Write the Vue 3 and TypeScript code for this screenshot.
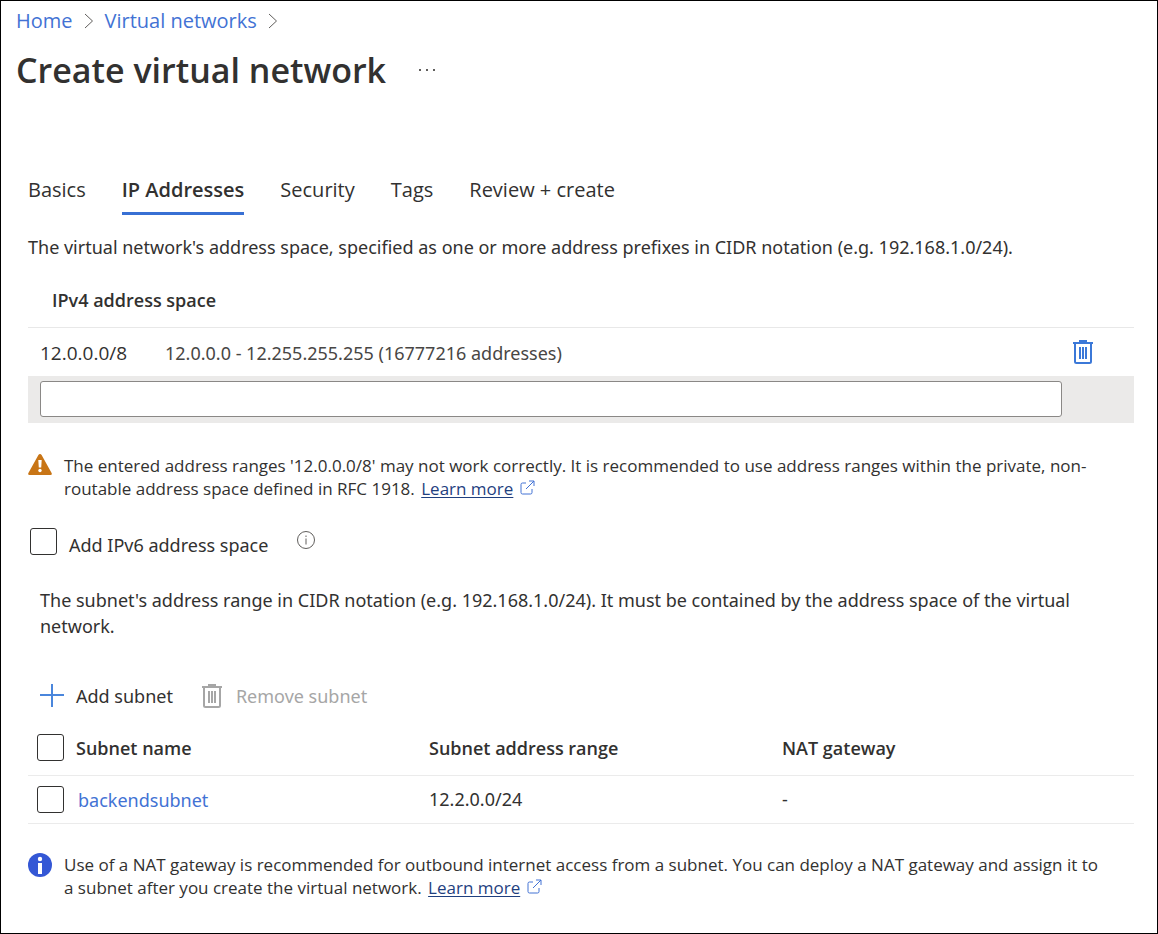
<script setup lang="ts">
import { ref } from 'vue'

interface Subnet {
  name: string
  range: string
  gateway: string
  selected: boolean
}

const tabs: string[] = ['Basics', 'IP Addresses', 'Security', 'Tags', 'Review + create']
const activeTab = ref('IP Addresses')
const newRange = ref('')
const addIpv6 = ref(false)
const allSelected = ref(false)
const subnets = ref<Subnet[]>([
  { name: 'backendsubnet', range: '12.2.0.0/24', gateway: '-', selected: false },
])

function toggleAll(): void {
  subnets.value.forEach((s) => (s.selected = allSelected.value))
}
</script>

<template>
  <div class="page">
    <nav class="crumbs" aria-label="Breadcrumb">
      <template v-for="crumb in ['Home', 'Virtual networks']" :key="crumb">
        <a href="#" class="crumb">{{ crumb }}</a>
        <svg class="chevron" viewBox="0 0 10 16" aria-hidden="true"><path d="M1 1l7.5 7L1 15" /></svg>
      </template>
    </nav>

    <header class="title-row">
      <h1>Create virtual network</h1>
      <button type="button" class="plain more" aria-label="More options">
        <svg viewBox="0 0 18 4" aria-hidden="true">
          <rect x="1" y="1" width="2" height="2" /><rect x="8" y="1" width="2" height="2" /><rect x="15" y="1" width="2" height="2" />
        </svg>
      </button>
    </header>

    <main class="content">
      <div class="tabs" role="tablist">
        <button
          v-for="tab in tabs"
          :key="tab"
          type="button"
          role="tab"
          class="plain tab"
          :class="{ active: tab === activeTab }"
          :aria-selected="tab === activeTab"
          @click="activeTab = tab"
        >{{ tab }}</button>
      </div>

      <p class="intro">The virtual network's address space, specified as one or more address prefixes in CIDR notation (e.g. 192.168.1.0/24).</p>

      <section class="space">
        <h2 id="space-title">IPv4 address space</h2>
        <div class="space-row">
          <span class="prefix">12.0.0.0/8</span>
          <span class="range">12.0.0.0 - 12.255.255.255 (16777216 addresses)</span>
          <button type="button" class="plain delete" aria-label="Delete address space">
            <svg class="bin" viewBox="0 0 20 24" aria-hidden="true">
              <path d="M0 3h20M7 3V1h6v2M2 3v18.500q0 1.500 1.500 1.500h13q1.500 0 1.500-1.500V3" />
              <path class="slats" d="M7 7v12M10 7v12M13 7v12" />
            </svg>
          </button>
        </div>
        <div class="entry">
          <input v-model="newRange" type="text" class="field" aria-labelledby="space-title" />
        </div>
      </section>

      <div class="notice warning">
        <svg class="notice-icon" viewBox="0 0 24 24" aria-hidden="true">
          <path class="warn-fill" d="M12 0q1 0 1.600 1.100l10 18q.8 1.900-1.100 1.900h-21q-1.900 0-1.100-1.900l10-18Q11 0 12 0z" />
          <path class="mark" d="M10.300 6h3.400l-.5 7.500h-2.400z" /><circle class="mark" cx="12" cy="16.500" r="1.700" />
        </svg>
        <p>The entered address ranges '12.0.0.0/8' may not work correctly. It is recommended to use address ranges within the private, non-routable address space defined in RFC 1918. <a href="#" class="learn">Learn more</a>
          <svg class="external" viewBox="0 0 15 15" aria-hidden="true"><path d="M6 3H2.500Q1 3 1 4.500v8Q1 14 2.500 14h8q1.500 0 1.500-1.500V9M9 1h5v5M14 1L6 9" /></svg>
        </p>
      </div>

      <div class="ipv6">
        <input id="ipv6" v-model="addIpv6" type="checkbox" class="check" />
        <label for="ipv6">Add IPv6 address space</label>
        <svg class="info" viewBox="0 0 20 20" role="img" aria-label="Information">
          <circle cx="10" cy="10" r="8.500" /><path d="M10 8.500v6M10 5.500v1.500" />
        </svg>
      </div>

      <p class="subnet-intro">The subnet's address range in CIDR notation (e.g. 192.168.1.0/24). It must be contained by the address space of the virtual network.</p>

      <div class="toolbar">
        <button type="button" class="plain tool">
          <svg class="plus" viewBox="0 0 24 24" aria-hidden="true"><path d="M12 0v23M0 11h24" /></svg>
          <span>Add subnet</span>
        </button>
        <button type="button" class="plain tool" disabled>
          <svg class="bin" viewBox="0 0 20 24" aria-hidden="true">
            <path d="M0 3h20M7 3V1h6v2M2 3v18.500q0 1.500 1.500 1.500h13q1.500 0 1.500-1.500V3" />
            <path class="slats" d="M7 7v12M10 7v12M13 7v12" />
          </svg>
          <span>Remove subnet</span>
        </button>
      </div>

      <table class="subnets">
        <thead>
          <tr>
            <th class="pick"><input v-model="allSelected" type="checkbox" class="check" aria-label="Select all subnets" @change="toggleAll" /></th>
            <th scope="col" class="name">Subnet name</th>
            <th scope="col" class="addr">Subnet address range</th>
            <th scope="col">NAT gateway</th>
          </tr>
        </thead>
        <tbody>
          <tr v-for="subnet in subnets" :key="subnet.name">
            <td class="pick"><input v-model="subnet.selected" type="checkbox" class="check" :aria-label="`Select ${subnet.name}`" /></td>
            <td class="link-cell"><a href="#" class="crumb">{{ subnet.name }}</a></td>
            <td>{{ subnet.range }}</td>
            <td>{{ subnet.gateway }}</td>
          </tr>
        </tbody>
      </table>

      <div class="notice tip">
        <svg class="notice-icon" viewBox="0 0 24 24" aria-hidden="true">
          <circle class="tip-fill" cx="12" cy="12" r="12" />
          <circle class="mark" cx="12" cy="6" r="2.200" /><path class="mark" d="M10 10h4v11h-4z" />
        </svg>
        <p>Use of a NAT gateway is recommended for outbound internet access from a subnet. You can deploy a NAT gateway and assign it to a subnet after you create the virtual network. <a href="#" class="learn">Learn more</a>
          <svg class="external" viewBox="0 0 15 15" aria-hidden="true"><path d="M6 3H2.500Q1 3 1 4.500v8Q1 14 2.500 14h8q1.500 0 1.500-1.500V9M9 1h5v5M14 1L6 9" /></svg>
        </p>
      </div>
    </main>
  </div>
</template>

<style>
body {
  margin: 0;
  background: #fff;
}
</style>

<style scoped>
.page {
  box-sizing: border-box;
  min-height: 100vh;
  border: 1px solid #000;
  color: #323130;
  font-family: 'Noto Sans', 'Open Sans', sans-serif;
  font-size: 18px;
  line-height: 26px;
}
h1, h2, p {
  margin: 0;
}
svg {
  fill: none;
  stroke: currentColor;
  flex: none;
}
.plain {
  padding: 0;
  border: 0;
  background: none;
  color: inherit;
  font: inherit;
}
.crumbs,
.title-row,
.tabs,
.notice,
.prefix,
h2,
.subnets th {
  font-family: 'Open Sans', 'Noto Sans', sans-serif;
}
.crumbs {
  display: flex;
  align-items: center;
  gap: 11px;
  padding: 7px 15px 0;
  font-size: 20px;
}
.crumb {
  color: #4272d4;
  text-decoration: none;
}
.chevron {
  width: 10px;
  height: 16px;
  color: #605e5c;
}
.title-row {
  display: flex;
  align-items: center;
  gap: 32px;
  padding: 12px 15px 0;
}
h1 {
  font-size: 34px;
  font-weight: 600;
  line-height: 48px;
}
.more {
  display: flex;
}
.more svg {
  width: 18px;
  height: 4px;
  fill: #605e5c;
  stroke: none;
}
.content {
  padding: 76px 23px 24px 27px;
}
.tabs {
  display: flex;
  gap: 36px;
  font-size: 20px;
}
.tab {
  padding: 7px 0 9px;
  border-bottom: 3px solid transparent;
}
.tab.active {
  border-color: #3870d4;
  font-weight: 600;
}
.intro {
  margin-top: 19px;
}
h2 {
  padding: 27px 24px 14px;
  border-bottom: 1px solid #e8e8e8;
  font-size: 18px;
  font-weight: 600;
  line-height: 26px;
}
.space-row {
  display: flex;
  align-items: center;
  height: 48px;
  padding: 0 41px 0 12px;
}
.prefix,
.range {
  padding-top: 2px;
}
.prefix {
  width: 125px;
  font-size: 19px;
}
.range {
  flex: 1;
  color: #484644;
}
.delete {
  display: flex;
  color: #3b78d8;
}
.bin {
  width: 20px;
  height: 24px;
  stroke-width: 2;
}
.entry {
  padding: 5px 72px 6px 12px;
  background: #ebeae9;
}
.field {
  display: block;
  box-sizing: border-box;
  width: 100%;
  height: 36px;
  padding: 0 10px;
  border: 1px solid #8a8886;
  border-radius: 3px;
  background: #fff;
  font: inherit;
}
.notice {
  display: flex;
  gap: 12px;
  font-size: 17px;
  line-height: 23px;
}
.notice p {
  max-width: 1046px;
}
.notice-icon {
  width: 24px;
  height: 24px;
  stroke: none;
}
.warning {
  margin-top: 31px;
}
.warn-fill {
  fill: #c87516;
}
.tip-fill {
  fill: #3457d5;
}
.mark {
  fill: #fff;
}
.learn {
  display: inline-block;
  margin-left: 2px;
  color: #1f3f7f;
  text-underline-offset: 2px;
}
.external {
  width: 15px;
  height: 15px;
  margin-left: 7px;
  color: #4272d4;
}
.check {
  appearance: none;
  display: block;
  box-sizing: border-box;
  flex: none;
  width: 27px;
  height: 27px;
  margin: 0;
  border: 1px solid #323130;
  border-radius: 3px;
  background: #fff;
}
.check:checked {
  background: #3870d4;
}
.ipv6 {
  display: flex;
  align-items: flex-start;
  margin-top: 28px;
  padding-left: 2px;
}
.ipv6 label {
  padding: 4px 28px 0 12px;
}
.info {
  width: 20px;
  height: 20px;
  margin-top: 2px;
  color: #605e5c;
}
.subnet-intro {
  margin-top: 29px;
  padding: 0 24px 0 12px;
}
.toolbar {
  display: flex;
  gap: 29px;
  margin-top: 44px;
  padding-left: 12px;
}
.tool {
  display: flex;
  align-items: center;
  gap: 12px;
}
.tool:disabled {
  gap: 14px;
  color: #a6a6a6;
}
.plus {
  width: 24px;
  height: 24px;
  color: #4a86dc;
  stroke-width: 2;
}
.subnets {
  width: 100%;
  margin-top: 12px;
  border-collapse: collapse;
  table-layout: fixed;
}
.subnets th,
.subnets td {
  box-sizing: border-box;
  height: 48px;
  padding: 0;
  border-bottom: 1px solid #ebebeb;
  text-align: left;
}
.subnets th {
  height: 54px;
  font-weight: 600;
}
.subnets .pick {
  width: 48px;
  padding-left: 9px;
}
.subnets .link-cell {
  padding: 2px 0 0 2px;
}
.name,
.addr {
  width: 353px;
}
.tip {
  margin-top: 29px;
}
</style>
